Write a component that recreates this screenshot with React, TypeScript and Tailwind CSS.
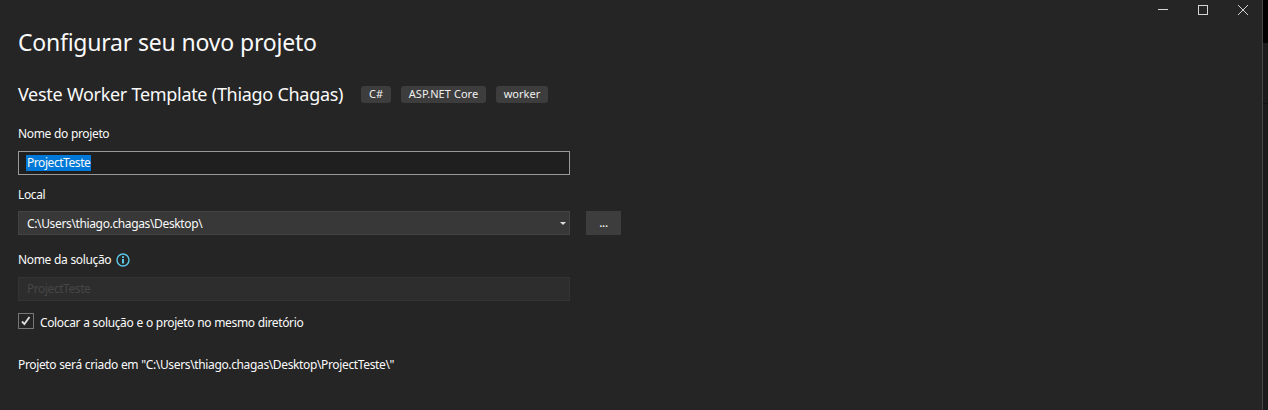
import React from 'react';

const tags = [
  { label: 'C#', box: 'w-[30px]' },
  { label: 'ASP.NET Core', box: 'w-[85px]' },
  { label: 'worker', box: 'w-[52px]' },
];

function WindowControls() {
  return (
    <div className="flex h-5 items-start justify-end pr-[14px] text-[#d6d6d6]">
      <svg width="90" height="20" viewBox="0 0 90 20" fill="none" stroke="currentColor" shapeRendering="crispEdges">
        <path d="M0 9.5h10" />
        <path d="M40.5 5.5h9v9h-9z" />
        <path d="M80 5l10 10M90 5l-10 10" shapeRendering="auto" />
      </svg>
    </div>
  );
}

function InfoIcon() {
  return (
    <svg width="14" height="14" viewBox="0 0 14 14" fill="none">
      <circle cx="7" cy="7" r="6" stroke="#5cc8e8" strokeWidth="1.4" />
      <path d="M6 3.3h2v1.6H6zM6 6h2v4.6H6z" fill="#5cc8e8" />
    </svg>
  );
}

export default function App() {
  return (
    <div className="flex h-[410px] w-[1268px] overflow-hidden bg-[#1a1a1a] font-['Noto_Sans','Open_Sans',sans-serif] text-[12px] leading-4 tracking-[-0.36px] text-[#fafafa] [word-spacing:0.3px]">
      <main className="flex w-[1263px] flex-col border-r border-b border-r-[#464646] border-b-[#2a1f24] bg-[#252525]">
        <WindowControls />
        <div className="flex flex-col items-start pl-[18px] whitespace-nowrap">
          <h1 className="mt-[6px] h-8 text-[23px] leading-8 tracking-[-0.23px]">Configurar seu novo projeto</h1>
          <div className="mt-6 flex h-6 items-center">
            <h2 className="w-[343px] text-[18px] leading-6 tracking-[-0.32px]">Veste Worker Template (Thiago Chagas)</h2>
            <ul className="flex gap-[10px] text-[11px] tracking-[0.02px]">
              {tags.map((t) => (
                <li key={t.label} className={`flex h-[17px] items-center justify-center rounded-[3px] bg-[#3d3d3d] text-[#f0f0f0] ${t.box}`}>
                  {t.label}
                </li>
              ))}
            </ul>
          </div>
          <label className="mt-5 h-4">Nome do projeto</label>
          <div className="mt-[9px] flex h-6 w-[552px] items-center border border-[#999999] bg-[#1f1f1f] pl-[7px]">
            <span className="flex h-4 w-[65px] items-center bg-[#0078d7] pl-px tracking-[-0.44px]">ProjectTeste</span>
          </div>
          <label className="mt-3 h-4">Local</label>
          <div className="mt-2 flex gap-4">
            <div className="flex h-6 w-[552px] items-center justify-between border border-[#434343] bg-[#383838] pr-[3px] pl-2">
              <span className="pt-px">C:\Users\thiago.chagas\Desktop\</span>
              <svg width="6" height="3" viewBox="0 0 6 3"><path d="M0 0h6L3 3z" fill="#dedede" /></svg>
            </div>
            <button className="flex h-6 w-[35px] items-center justify-center bg-[#3d3d3d]">...</button>
          </div>
          <div className="mt-[17px] flex h-4 items-center">
            <label className="w-[98px]">Nome da solução</label>
            <InfoIcon />
          </div>
          <div className="mt-[9px] flex h-6 w-[552px] items-center border border-[#333333] bg-[#2d2d2d] pl-2 text-[#464646]">
            <span className="tracking-[-0.44px]">ProjectTeste</span>
          </div>
          <div className="mt-3 flex h-4 items-center gap-[6px]">
            <span className="flex size-4 items-center justify-center border border-[#777777] bg-[#252525]">
              <svg width="10" height="10" viewBox="0 0 10 10" fill="none"><path d="M1 5.5l2.4 2.6L8.5 1" stroke="#dedede" strokeWidth="1.9" /></svg>
            </span>
            <label className="pt-1">Colocar a solução e o projeto no mesmo diretório</label>
          </div>
          <p className="mt-7 h-4">Projeto será criado em "C:\Users\thiago.chagas\Desktop\ProjectTeste\"</p>
        </div>
      </main>
      <aside className="flex w-[5px] flex-col bg-[#1b1b1b]">
        <div className="h-[43px] bg-black" />
        <div className="h-[61px] border-b border-[#101010]" />
      </aside>
    </div>
  );
}
